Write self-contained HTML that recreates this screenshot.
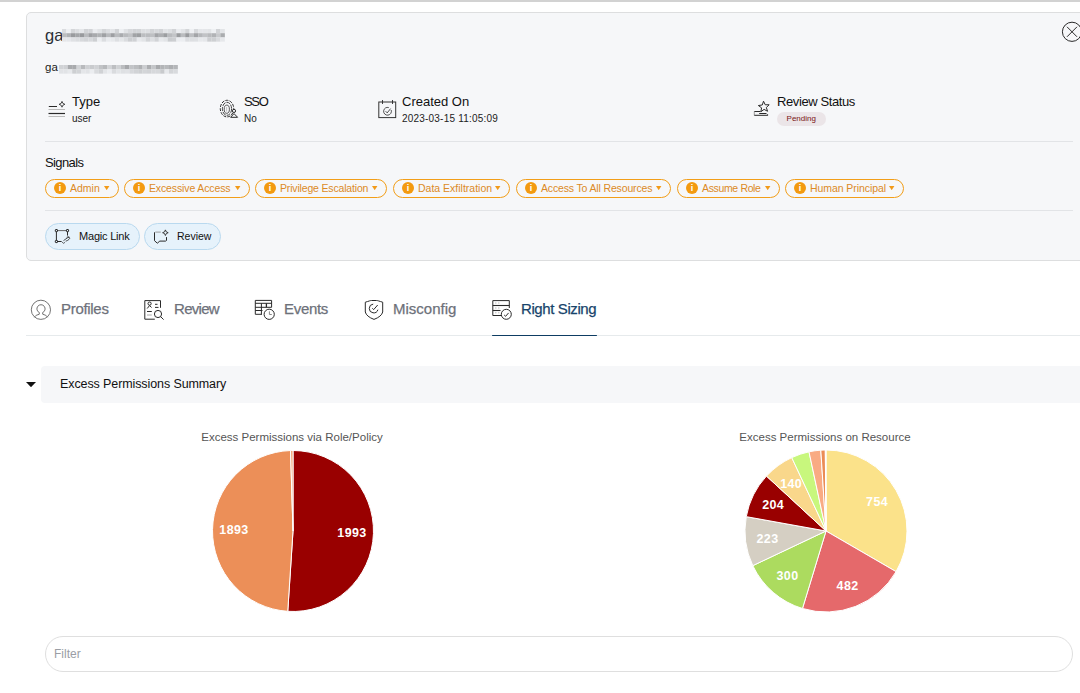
<!DOCTYPE html>
<html><head><meta charset="utf-8">
<style>
*{box-sizing:border-box;margin:0;padding:0}
html,body{width:1080px;height:693px;overflow:hidden;background:#fff;font-family:"Liberation Sans",sans-serif;color:#1a1a1a;position:relative}
.abs{position:absolute}
#topbar{left:0;top:0;width:1080px;height:2px;background:#d2d2d2}
#card{left:26px;top:12px;width:1080px;height:249px;background:#f6f7f9;border:1px solid #dddedf;border-radius:5px}
.hr{height:1px;background:#e2e4e7}
.lbl{font-size:13px;color:#111;white-space:nowrap}
.val{font-size:10px;color:#222;white-space:nowrap}
.chip{top:179px;height:19px;border:1.2px solid #f29e18;border-radius:10px;color:#dc8a26;font-size:10.5px;white-space:nowrap}
.chip .ic{position:absolute;left:8px;top:2px;width:12px;height:12px;border-radius:50%;background:#f39a10;color:#fff;font-size:9px;font-weight:bold;text-align:center;line-height:12px}
.chip .t{position:absolute;left:24px;top:2px}
.chip .dd{position:absolute;top:6.2px;right:8.2px}
.btn{top:223px;height:27px;border:1px solid #b9d9ef;background:#e6f2fb;border-radius:14px;font-size:11px;color:#111;white-space:nowrap}
.tab{top:300px;font-size:15px;color:#6d717a;white-space:nowrap;-webkit-text-stroke:0.25px currentColor}
</style></head><body>
<div id="topbar" class="abs"></div>
<div id="card" class="abs"></div>
<div class="abs" style="left:45px;top:26px;font-size:16.5px;color:#2b2f36;white-space:nowrap">ga</div>
<svg class="abs" style="left:62.4px;top:29px;filter:blur(0.45px)" width="162.8" height="12.6"><rect x="0.00" y="0.00" width="4.45" height="4.25" fill="rgb(218,220,223)"/><rect x="4.40" y="0.00" width="4.45" height="4.25" fill="rgb(238,240,243)"/><rect x="8.80" y="0.00" width="4.45" height="4.25" fill="rgb(212,214,217)"/><rect x="13.20" y="0.00" width="4.45" height="4.25" fill="rgb(220,222,225)"/><rect x="17.60" y="0.00" width="4.45" height="4.25" fill="rgb(228,230,233)"/><rect x="22.00" y="0.00" width="4.45" height="4.25" fill="rgb(209,211,214)"/><rect x="26.40" y="0.00" width="4.45" height="4.25" fill="rgb(210,212,215)"/><rect x="30.80" y="0.00" width="4.45" height="4.25" fill="rgb(234,236,239)"/><rect x="35.20" y="0.00" width="4.45" height="4.25" fill="rgb(225,227,230)"/><rect x="39.60" y="0.00" width="4.45" height="4.25" fill="rgb(211,213,216)"/><rect x="44.00" y="0.00" width="4.45" height="4.25" fill="rgb(219,221,224)"/><rect x="48.40" y="0.00" width="4.45" height="4.25" fill="rgb(226,228,231)"/><rect x="52.80" y="0.00" width="4.45" height="4.25" fill="rgb(209,211,214)"/><rect x="57.20" y="0.00" width="4.45" height="4.25" fill="rgb(237,239,242)"/><rect x="61.60" y="0.00" width="4.45" height="4.25" fill="rgb(224,226,229)"/><rect x="66.00" y="0.00" width="4.45" height="4.25" fill="rgb(214,216,219)"/><rect x="70.40" y="0.00" width="4.45" height="4.25" fill="rgb(209,211,214)"/><rect x="74.80" y="0.00" width="4.45" height="4.25" fill="rgb(210,212,215)"/><rect x="79.20" y="0.00" width="4.45" height="4.25" fill="rgb(221,223,226)"/><rect x="83.60" y="0.00" width="4.45" height="4.25" fill="rgb(221,223,226)"/><rect x="88.00" y="0.00" width="4.45" height="4.25" fill="rgb(210,212,215)"/><rect x="92.40" y="0.00" width="4.45" height="4.25" fill="rgb(215,217,220)"/><rect x="96.80" y="0.00" width="4.45" height="4.25" fill="rgb(210,212,215)"/><rect x="101.20" y="0.00" width="4.45" height="4.25" fill="rgb(225,227,230)"/><rect x="105.60" y="0.00" width="4.45" height="4.25" fill="rgb(221,223,226)"/><rect x="110.00" y="0.00" width="4.45" height="4.25" fill="rgb(209,211,214)"/><rect x="114.40" y="0.00" width="4.45" height="4.25" fill="rgb(234,236,239)"/><rect x="118.80" y="0.00" width="4.45" height="4.25" fill="rgb(226,228,231)"/><rect x="123.20" y="0.00" width="4.45" height="4.25" fill="rgb(211,213,216)"/><rect x="127.60" y="0.00" width="4.45" height="4.25" fill="rgb(238,240,243)"/><rect x="132.00" y="0.00" width="4.45" height="4.25" fill="rgb(215,217,220)"/><rect x="136.40" y="0.00" width="4.45" height="4.25" fill="rgb(228,230,233)"/><rect x="140.80" y="0.00" width="4.45" height="4.25" fill="rgb(228,230,233)"/><rect x="145.20" y="0.00" width="4.45" height="4.25" fill="rgb(226,228,231)"/><rect x="149.60" y="0.00" width="4.45" height="4.25" fill="rgb(238,240,243)"/><rect x="154.00" y="0.00" width="4.45" height="4.25" fill="rgb(209,211,214)"/><rect x="158.40" y="0.00" width="4.45" height="4.25" fill="rgb(226,228,231)"/><rect x="0.00" y="4.20" width="4.45" height="4.25" fill="rgb(187,189,192)"/><rect x="4.40" y="4.20" width="4.45" height="4.25" fill="rgb(175,177,180)"/><rect x="8.80" y="4.20" width="4.45" height="4.25" fill="rgb(153,155,158)"/><rect x="13.20" y="4.20" width="4.45" height="4.25" fill="rgb(164,166,169)"/><rect x="17.60" y="4.20" width="4.45" height="4.25" fill="rgb(152,154,157)"/><rect x="22.00" y="4.20" width="4.45" height="4.25" fill="rgb(185,187,190)"/><rect x="26.40" y="4.20" width="4.45" height="4.25" fill="rgb(158,160,163)"/><rect x="30.80" y="4.20" width="4.45" height="4.25" fill="rgb(168,170,173)"/><rect x="35.20" y="4.20" width="4.45" height="4.25" fill="rgb(176,178,181)"/><rect x="39.60" y="4.20" width="4.45" height="4.25" fill="rgb(159,161,164)"/><rect x="44.00" y="4.20" width="4.45" height="4.25" fill="rgb(184,186,189)"/><rect x="48.40" y="4.20" width="4.45" height="4.25" fill="rgb(157,159,162)"/><rect x="52.80" y="4.20" width="4.45" height="4.25" fill="rgb(186,188,191)"/><rect x="57.20" y="4.20" width="4.45" height="4.25" fill="rgb(169,171,174)"/><rect x="61.60" y="4.20" width="4.45" height="4.25" fill="rgb(185,187,190)"/><rect x="66.00" y="4.20" width="4.45" height="4.25" fill="rgb(193,195,198)"/><rect x="70.40" y="4.20" width="4.45" height="4.25" fill="rgb(161,163,166)"/><rect x="74.80" y="4.20" width="4.45" height="4.25" fill="rgb(156,158,161)"/><rect x="79.20" y="4.20" width="4.45" height="4.25" fill="rgb(187,189,192)"/><rect x="83.60" y="4.20" width="4.45" height="4.25" fill="rgb(186,188,191)"/><rect x="88.00" y="4.20" width="4.45" height="4.25" fill="rgb(190,192,195)"/><rect x="92.40" y="4.20" width="4.45" height="4.25" fill="rgb(162,164,167)"/><rect x="96.80" y="4.20" width="4.45" height="4.25" fill="rgb(173,175,178)"/><rect x="101.20" y="4.20" width="4.45" height="4.25" fill="rgb(156,158,161)"/><rect x="105.60" y="4.20" width="4.45" height="4.25" fill="rgb(185,187,190)"/><rect x="110.00" y="4.20" width="4.45" height="4.25" fill="rgb(195,197,200)"/><rect x="114.40" y="4.20" width="4.45" height="4.25" fill="rgb(154,156,159)"/><rect x="118.80" y="4.20" width="4.45" height="4.25" fill="rgb(186,188,191)"/><rect x="123.20" y="4.20" width="4.45" height="4.25" fill="rgb(153,155,158)"/><rect x="127.60" y="4.20" width="4.45" height="4.25" fill="rgb(189,191,194)"/><rect x="132.00" y="4.20" width="4.45" height="4.25" fill="rgb(163,165,168)"/><rect x="136.40" y="4.20" width="4.45" height="4.25" fill="rgb(181,183,186)"/><rect x="140.80" y="4.20" width="4.45" height="4.25" fill="rgb(193,195,198)"/><rect x="145.20" y="4.20" width="4.45" height="4.25" fill="rgb(184,186,189)"/><rect x="149.60" y="4.20" width="4.45" height="4.25" fill="rgb(177,179,182)"/><rect x="154.00" y="4.20" width="4.45" height="4.25" fill="rgb(199,201,204)"/><rect x="158.40" y="4.20" width="4.45" height="4.25" fill="rgb(170,172,175)"/><rect x="0.00" y="8.40" width="4.45" height="4.25" fill="rgb(229,231,234)"/><rect x="4.40" y="8.40" width="4.45" height="4.25" fill="rgb(229,231,234)"/><rect x="8.80" y="8.40" width="4.45" height="4.25" fill="rgb(223,225,228)"/><rect x="13.20" y="8.40" width="4.45" height="4.25" fill="rgb(219,221,224)"/><rect x="17.60" y="8.40" width="4.45" height="4.25" fill="rgb(215,217,220)"/><rect x="22.00" y="8.40" width="4.45" height="4.25" fill="rgb(211,213,216)"/><rect x="26.40" y="8.40" width="4.45" height="4.25" fill="rgb(215,217,220)"/><rect x="30.80" y="8.40" width="4.45" height="4.25" fill="rgb(205,207,210)"/><rect x="35.20" y="8.40" width="4.45" height="4.25" fill="rgb(236,238,241)"/><rect x="39.60" y="8.40" width="4.45" height="4.25" fill="rgb(219,221,224)"/><rect x="44.00" y="8.40" width="4.45" height="4.25" fill="rgb(233,235,238)"/><rect x="48.40" y="8.40" width="4.45" height="4.25" fill="rgb(231,233,236)"/><rect x="52.80" y="8.40" width="4.45" height="4.25" fill="rgb(221,223,226)"/><rect x="57.20" y="8.40" width="4.45" height="4.25" fill="rgb(228,230,233)"/><rect x="61.60" y="8.40" width="4.45" height="4.25" fill="rgb(218,220,223)"/><rect x="66.00" y="8.40" width="4.45" height="4.25" fill="rgb(204,206,209)"/><rect x="70.40" y="8.40" width="4.45" height="4.25" fill="rgb(207,209,212)"/><rect x="74.80" y="8.40" width="4.45" height="4.25" fill="rgb(232,234,237)"/><rect x="79.20" y="8.40" width="4.45" height="4.25" fill="rgb(226,228,231)"/><rect x="83.60" y="8.40" width="4.45" height="4.25" fill="rgb(210,212,215)"/><rect x="88.00" y="8.40" width="4.45" height="4.25" fill="rgb(221,223,226)"/><rect x="92.40" y="8.40" width="4.45" height="4.25" fill="rgb(209,211,214)"/><rect x="96.80" y="8.40" width="4.45" height="4.25" fill="rgb(231,233,236)"/><rect x="101.20" y="8.40" width="4.45" height="4.25" fill="rgb(226,228,231)"/><rect x="105.60" y="8.40" width="4.45" height="4.25" fill="rgb(202,204,207)"/><rect x="110.00" y="8.40" width="4.45" height="4.25" fill="rgb(204,206,209)"/><rect x="114.40" y="8.40" width="4.45" height="4.25" fill="rgb(235,237,240)"/><rect x="118.80" y="8.40" width="4.45" height="4.25" fill="rgb(236,238,241)"/><rect x="123.20" y="8.40" width="4.45" height="4.25" fill="rgb(220,222,225)"/><rect x="127.60" y="8.40" width="4.45" height="4.25" fill="rgb(221,223,226)"/><rect x="132.00" y="8.40" width="4.45" height="4.25" fill="rgb(222,224,227)"/><rect x="136.40" y="8.40" width="4.45" height="4.25" fill="rgb(231,233,236)"/><rect x="140.80" y="8.40" width="4.45" height="4.25" fill="rgb(229,231,234)"/><rect x="145.20" y="8.40" width="4.45" height="4.25" fill="rgb(204,206,209)"/><rect x="149.60" y="8.40" width="4.45" height="4.25" fill="rgb(205,207,210)"/><rect x="154.00" y="8.40" width="4.45" height="4.25" fill="rgb(217,219,222)"/><rect x="158.40" y="8.40" width="4.45" height="4.25" fill="rgb(230,232,235)"/></svg>
<div class="abs" style="left:45px;top:61px;font-size:11.5px;color:#222;white-space:nowrap">ga</div>
<svg class="abs" style="left:58.8px;top:65px;filter:blur(0.45px)" width="118.8" height="8.6"><rect x="0.00" y="0.00" width="4.45" height="4.35" fill="rgb(209,211,214)"/><rect x="4.40" y="0.00" width="4.45" height="4.35" fill="rgb(207,209,212)"/><rect x="8.80" y="0.00" width="4.45" height="4.35" fill="rgb(169,171,174)"/><rect x="13.20" y="0.00" width="4.45" height="4.35" fill="rgb(168,170,173)"/><rect x="17.60" y="0.00" width="4.45" height="4.35" fill="rgb(209,211,214)"/><rect x="22.00" y="0.00" width="4.45" height="4.35" fill="rgb(184,186,189)"/><rect x="26.40" y="0.00" width="4.45" height="4.35" fill="rgb(206,208,211)"/><rect x="30.80" y="0.00" width="4.45" height="4.35" fill="rgb(201,203,206)"/><rect x="35.20" y="0.00" width="4.45" height="4.35" fill="rgb(208,210,213)"/><rect x="39.60" y="0.00" width="4.45" height="4.35" fill="rgb(193,195,198)"/><rect x="44.00" y="0.00" width="4.45" height="4.35" fill="rgb(183,185,188)"/><rect x="48.40" y="0.00" width="4.45" height="4.35" fill="rgb(210,212,215)"/><rect x="52.80" y="0.00" width="4.45" height="4.35" fill="rgb(189,191,194)"/><rect x="57.20" y="0.00" width="4.45" height="4.35" fill="rgb(207,209,212)"/><rect x="61.60" y="0.00" width="4.45" height="4.35" fill="rgb(187,189,192)"/><rect x="66.00" y="0.00" width="4.45" height="4.35" fill="rgb(166,168,171)"/><rect x="70.40" y="0.00" width="4.45" height="4.35" fill="rgb(194,196,199)"/><rect x="74.80" y="0.00" width="4.45" height="4.35" fill="rgb(187,189,192)"/><rect x="79.20" y="0.00" width="4.45" height="4.35" fill="rgb(175,177,180)"/><rect x="83.60" y="0.00" width="4.45" height="4.35" fill="rgb(204,206,209)"/><rect x="88.00" y="0.00" width="4.45" height="4.35" fill="rgb(172,174,177)"/><rect x="92.40" y="0.00" width="4.45" height="4.35" fill="rgb(196,198,201)"/><rect x="96.80" y="0.00" width="4.45" height="4.35" fill="rgb(168,170,173)"/><rect x="101.20" y="0.00" width="4.45" height="4.35" fill="rgb(178,180,183)"/><rect x="105.60" y="0.00" width="4.45" height="4.35" fill="rgb(183,185,188)"/><rect x="110.00" y="0.00" width="4.45" height="4.35" fill="rgb(173,175,178)"/><rect x="114.40" y="0.00" width="4.45" height="4.35" fill="rgb(180,182,185)"/><rect x="0.00" y="4.30" width="4.45" height="4.35" fill="rgb(225,227,230)"/><rect x="4.40" y="4.30" width="4.45" height="4.35" fill="rgb(225,227,230)"/><rect x="8.80" y="4.30" width="4.45" height="4.35" fill="rgb(231,233,236)"/><rect x="13.20" y="4.30" width="4.45" height="4.35" fill="rgb(205,207,210)"/><rect x="17.60" y="4.30" width="4.45" height="4.35" fill="rgb(210,212,215)"/><rect x="22.00" y="4.30" width="4.45" height="4.35" fill="rgb(228,230,233)"/><rect x="26.40" y="4.30" width="4.45" height="4.35" fill="rgb(225,227,230)"/><rect x="30.80" y="4.30" width="4.45" height="4.35" fill="rgb(235,237,240)"/><rect x="35.20" y="4.30" width="4.45" height="4.35" fill="rgb(217,219,222)"/><rect x="39.60" y="4.30" width="4.45" height="4.35" fill="rgb(208,210,213)"/><rect x="44.00" y="4.30" width="4.45" height="4.35" fill="rgb(227,229,232)"/><rect x="48.40" y="4.30" width="4.45" height="4.35" fill="rgb(235,237,240)"/><rect x="52.80" y="4.30" width="4.45" height="4.35" fill="rgb(217,219,222)"/><rect x="57.20" y="4.30" width="4.45" height="4.35" fill="rgb(226,228,231)"/><rect x="61.60" y="4.30" width="4.45" height="4.35" fill="rgb(222,224,227)"/><rect x="66.00" y="4.30" width="4.45" height="4.35" fill="rgb(224,226,229)"/><rect x="70.40" y="4.30" width="4.45" height="4.35" fill="rgb(214,216,219)"/><rect x="74.80" y="4.30" width="4.45" height="4.35" fill="rgb(209,211,214)"/><rect x="79.20" y="4.30" width="4.45" height="4.35" fill="rgb(205,207,210)"/><rect x="83.60" y="4.30" width="4.45" height="4.35" fill="rgb(211,213,216)"/><rect x="88.00" y="4.30" width="4.45" height="4.35" fill="rgb(209,211,214)"/><rect x="92.40" y="4.30" width="4.45" height="4.35" fill="rgb(214,216,219)"/><rect x="96.80" y="4.30" width="4.45" height="4.35" fill="rgb(214,216,219)"/><rect x="101.20" y="4.30" width="4.45" height="4.35" fill="rgb(200,202,205)"/><rect x="105.60" y="4.30" width="4.45" height="4.35" fill="rgb(231,233,236)"/><rect x="110.00" y="4.30" width="4.45" height="4.35" fill="rgb(211,213,216)"/><rect x="114.40" y="4.30" width="4.45" height="4.35" fill="rgb(216,218,221)"/></svg>

<div class="abs lbl" style="left:72px;top:94px">Type</div>
<div class="abs val" style="left:72px;top:113px">user</div>
<div class="abs lbl" style="left:244px;top:94px;letter-spacing:-1.3px">SSO</div>
<div class="abs val" style="left:244px;top:113px">No</div>
<div class="abs lbl" style="left:402px;top:94px">Created On</div>
<div class="abs val" style="left:402px;top:113px;letter-spacing:0.2px">2023-03-15 11:05:09</div>
<div class="abs lbl" style="left:777px;top:94px;letter-spacing:-0.4px">Review Status</div>
<div class="abs" style="left:777px;top:112px;width:48.5px;height:13.5px;border-radius:7px;background:#ebe5e8;color:#7a1515;font-size:8px;text-align:center;line-height:14px">Pending</div>

<div class="abs hr" style="left:45px;top:141px;width:1028px"></div>
<div class="abs lbl" style="left:45px;top:155px;letter-spacing:-0.6px">Signals</div>

<div class="abs chip" style="left:45px;width:74px"><span class="ic">i</span><span class="t">Admin</span><svg class="dd" width="5.4" height="4.2"><path d="M0 0 L5.4 0 L2.7 4.2 Z" fill="#f29a18"/></svg></div>
<div class="abs chip" style="left:124px;width:126px"><span class="ic">i</span><span class="t" style="letter-spacing:-0.13px">Excessive Access</span><svg class="dd" width="5.4" height="4.2"><path d="M0 0 L5.4 0 L2.7 4.2 Z" fill="#f29a18"/></svg></div>
<div class="abs chip" style="left:255px;width:132px"><span class="ic">i</span><span class="t" style="letter-spacing:-0.17px">Privilege Escalation</span><svg class="dd" width="5.4" height="4.2"><path d="M0 0 L5.4 0 L2.7 4.2 Z" fill="#f29a18"/></svg></div>
<div class="abs chip" style="left:393px;width:117px"><span class="ic">i</span><span class="t">Data Exfiltration</span><svg class="dd" width="5.4" height="4.2"><path d="M0 0 L5.4 0 L2.7 4.2 Z" fill="#f29a18"/></svg></div>
<div class="abs chip" style="left:516px;width:155px"><span class="ic">i</span><span class="t" style="letter-spacing:-0.15px">Access To All Resources</span><svg class="dd" width="5.4" height="4.2"><path d="M0 0 L5.4 0 L2.7 4.2 Z" fill="#f29a18"/></svg></div>
<div class="abs chip" style="left:677px;width:103px"><span class="ic">i</span><span class="t" style="letter-spacing:-0.35px">Assume Role</span><svg class="dd" width="5.4" height="4.2"><path d="M0 0 L5.4 0 L2.7 4.2 Z" fill="#f29a18"/></svg></div>
<div class="abs chip" style="left:785px;width:119px"><span class="ic">i</span><span class="t" style="letter-spacing:-0.07px">Human Principal</span><svg class="dd" width="5.4" height="4.2"><path d="M0 0 L5.4 0 L2.7 4.2 Z" fill="#f29a18"/></svg></div>

<div class="abs hr" style="left:45px;top:210px;width:1028px"></div>
<div class="abs btn" style="left:45px;width:95px"><span class="abs" style="left:33px;top:6px;letter-spacing:-0.2px">Magic Link</span></div>
<div class="abs btn" style="left:144px;width:77px"><span class="abs" style="left:32px;top:6px;font-size:10.5px">Review</span></div>

<div class="abs tab" style="left:61px;letter-spacing:-0.3px">Profiles</div>
<div class="abs tab" style="left:174px;letter-spacing:-0.7px">Review</div>
<div class="abs tab" style="left:284px;letter-spacing:-0.3px">Events</div>
<div class="abs tab" style="left:393px">Misconfig</div>
<div class="abs tab" style="left:521px;color:#18446b;letter-spacing:-0.4px">Right Sizing</div>
<div class="abs hr" style="left:26px;top:335px;width:1054px;background:#e6eaec"></div>
<div class="abs" style="left:492px;top:334.5px;width:105px;height:1.7px;background:#0e3d63;border-radius:1px"></div>

<svg class="abs" style="left:26px;top:382px" width="10" height="5.2"><path d="M0 0 L10 0 L5 5.2 Z" fill="#111"/></svg>
<div class="abs" style="left:41px;top:366px;width:1050px;height:36.5px;background:#f6f7f9;border-radius:4px"></div>
<div class="abs" style="left:60px;top:377px;font-size:12.5px;color:#111;white-space:nowrap;letter-spacing:-0.1px">Excess Permissions Summary</div>

<div class="abs" style="left:192px;top:430.7px;width:200px;text-align:center;font-size:11.5px;color:#555;white-space:nowrap">Excess Permissions via Role/Policy</div>
<div class="abs" style="left:675px;top:430.7px;width:300px;text-align:center;font-size:11.5px;color:#555;white-space:nowrap">Excess Permissions on Resource</div>
<svg class="abs" style="left:0;top:0" width="1080" height="693" font-family="Liberation Sans, sans-serif">
<path d="M293,531 L293.00,450.50 A80.5,80.5 0 1 1 287.76,611.33 Z" fill="#990000" stroke="#fff" stroke-width="1"/>
<path d="M293,531 L287.76,611.33 A80.5,80.5 0 0 1 290.54,450.54 Z" fill="#ec8f58" stroke="#fff" stroke-width="1"/>
<path d="M293,531 L290.54,450.54 A80.5,80.5 0 0 1 293.00,450.50 Z" fill="#f3a070" stroke="#fff" stroke-width="1"/>
<text x="352.0" y="537.3" text-anchor="middle" font-size="12.5" font-weight="bold" letter-spacing="0.4" fill="#fff">1993</text>
<text x="234.0" y="534.4" text-anchor="middle" font-size="12.5" font-weight="bold" letter-spacing="0.4" fill="#fff">1893</text>
<path d="M826,531 L826.00,450.00 A81,81 0 0 1 896.07,571.63 Z" fill="#fbe28a" stroke="#fff" stroke-width="1"/>
<path d="M826,531 L896.07,571.63 A81,81 0 0 1 802.47,608.51 Z" fill="#e5696b" stroke="#fff" stroke-width="1"/>
<path d="M826,531 L802.47,608.51 A81,81 0 0 1 752.79,565.65 Z" fill="#acdb5f" stroke="#fff" stroke-width="1"/>
<path d="M826,531 L752.79,565.65 A81,81 0 0 1 746.28,516.66 Z" fill="#d5cfc3" stroke="#fff" stroke-width="1"/>
<path d="M826,531 L746.28,516.66 A81,81 0 0 1 766.46,476.08 Z" fill="#990000" stroke="#fff" stroke-width="1"/>
<path d="M826,531 L766.46,476.08 A81,81 0 0 1 791.76,457.59 Z" fill="#f9d78b" stroke="#fff" stroke-width="1"/>
<path d="M826,531 L791.76,457.59 A81,81 0 0 1 809.01,451.80 Z" fill="#c8f77d" stroke="#fff" stroke-width="1"/>
<path d="M826,531 L809.01,451.80 A81,81 0 0 1 820.82,450.17 Z" fill="#f9ab83" stroke="#fff" stroke-width="1"/>
<path d="M826,531 L820.82,450.17 A81,81 0 0 1 825.32,450.00 Z" fill="#eb8c55" stroke="#fff" stroke-width="1"/>
<path d="M826,531 L825.32,450.00 A81,81 0 0 1 826.00,450.00 Z" fill="#fbe8c8" stroke="#fff" stroke-width="1"/>
<text x="877.1" y="505.9" text-anchor="middle" font-size="12.5" font-weight="bold" letter-spacing="0.4" fill="#fff">754</text>
<text x="847.6" y="590.3" text-anchor="middle" font-size="12.5" font-weight="bold" letter-spacing="0.4" fill="#fff">482</text>
<text x="787.5" y="580.1" text-anchor="middle" font-size="12.5" font-weight="bold" letter-spacing="0.4" fill="#fff">300</text>
<text x="767.5" y="543.2" text-anchor="middle" font-size="12.5" font-weight="bold" letter-spacing="0.4" fill="#fff">223</text>
<text x="773.2" y="509.1" text-anchor="middle" font-size="12.5" font-weight="bold" letter-spacing="0.4" fill="#fff">204</text>
<text x="791.2" y="487.8" text-anchor="middle" font-size="12.5" font-weight="bold" letter-spacing="0.4" fill="#fff">140</text>
</svg>

<svg class="abs" style="left:0;top:0" width="1080" height="693">
<!-- type icon -->
<g fill="none" stroke="#2a2a2a" stroke-width="1">
<line x1="48.8" y1="106.5" x2="57" y2="106.5" stroke-width="1"/>
<path d="M62 101.4 Q62.3 103.9 64.9 104.3 Q62.3 104.7 62 107.2 Q61.7 104.7 59.1 104.3 Q61.7 103.9 62 101.4 Z" stroke-width="0.85"/>
<line x1="48.5" y1="109.5" x2="65" y2="109.5" stroke="#bbb"/>
<line x1="48.5" y1="113.5" x2="65" y2="113.5" stroke-width="1.2"/>
<line x1="48.5" y1="116.5" x2="65" y2="116.5" stroke="#bbb"/>
</g>
<!-- sso icon -->
<g fill="none" stroke="#2a2a2a" stroke-width="1" stroke-width="0.85">
<ellipse cx="227" cy="108.6" rx="6.7" ry="8.3" stroke-dasharray="3 1.2"/>
<ellipse cx="227" cy="108.8" rx="4.6" ry="6.5" stroke-dasharray="4 1" stroke="#444"/>
<ellipse cx="226.8" cy="109.2" rx="2.6" ry="4.1" stroke="#555"/>
<line x1="226.6" y1="107" x2="226.6" y2="111.5" stroke="#aaa" stroke-width="0.7"/>
<circle cx="234" cy="110.9" r="1.6" fill="#f6f7f9"/>
<path d="M230.6 117.3 L234 113.6 L237.6 117.3 Z" fill="#f6f7f9" stroke-linejoin="round"/>
</g>
<!-- calendar icon -->
<g fill="none" stroke="#2a2a2a" stroke-width="1">
<rect x="378.8" y="102" width="16.9" height="15.6" stroke="#333"/>
<line x1="382.5" y1="100" x2="382.5" y2="104" stroke-width="0.9"/>
<line x1="392.5" y1="100" x2="392.5" y2="104" stroke-width="0.9"/>
<path d="M391.2 110 A3.9 3.9 0 1 1 388.8 107.6" stroke-width="0.8"/>
<path d="M385.6 111.2 L387.2 112.9 L390.6 108.6" stroke-width="0.8"/>
</g>
<!-- review status icon -->
<g fill="none" stroke="#2a2a2a" stroke-width="1" stroke-width="0.85">
<path d="M763.50 101.21 L765.22 104.78 L769.18 104.76 L766.33 107.50 L767.56 111.27 L764.07 109.39 L760.88 111.73 L761.58 107.84 L758.37 105.52 L762.29 104.98 Z"/>
<path d="M754.3 111.5 L760.5 111.5" stroke-width="1"/>
<path d="M754.3 111.5 L754.3 115.4" stroke="#777" stroke-width="0.7"/>
<path d="M754.3 115.3 L767.6 115.3 M767.6 114.3 L767.6 115.6 M759.2 113.5 L766.5 113.5"/>
</g>
<!-- close icon -->
<g fill="none" stroke="#2a2a2a" stroke-width="1" stroke="#222" stroke-width="1.1">
<circle cx="1072" cy="31.8" r="9.6"/>
<line x1="1067" y1="26.8" x2="1077" y2="36.8"/>
<line x1="1077" y1="26.8" x2="1067" y2="36.8"/>
</g>
<!-- magic link icon -->
<g fill="none" stroke="#2a2a2a" stroke-width="1" stroke="#1e1e1e" stroke-width="0.9">
<path d="M57.6 230.6 L66.3 230.6" stroke="#666"/>
<path d="M56.4 231.8 L56.4 240.3 M57.6 241.5 L61.6 241.5 M67.5 231.8 L67.5 235.6" stroke-width="1"/>
<rect x="55.3" y="229.5" width="2.2" height="2.2" rx="0.5"/><rect x="66.4" y="229.5" width="2.2" height="2.2" rx="0.5"/><rect x="55.3" y="240.4" width="2.2" height="2.2" rx="0.5"/>
<path d="M62 241.8 L63.6 243.4 L64.8 242.3 M63.5 240.6 L67.8 237.6 Q69.6 236.6 69.8 238.2 L69 239.4 Q67.5 240.8 65.6 241.2 M66.6 237.3 Q68 236.5 69.2 237" stroke-width="0.8"/>
</g>
<!-- review btn icon -->
<g fill="none" stroke="#2a2a2a" stroke-width="1" stroke="#1e1e1e" stroke-width="1">
<path d="M155.3 232.1 L160.8 232.1" stroke="#9a9a9a"/>
<path d="M154.5 232.3 L154.5 240.7 L157.3 243.2 L159.8 241.1 L165.8 241.1 L166.5 240.4 L166.5 237.1"/>
<path d="M165.4 229.9 Q165.7 232.4 168.2 232.7 Q165.7 233 165.4 235.5 Q165.1 233 162.6 232.7 Q165.1 232.4 165.4 229.9 Z" stroke-width="0.9"/>
</g>
<!-- profiles tab icon -->
<g fill="none" stroke="#2a2a2a" stroke-width="1" stroke="#555" stroke-width="0.9">
<circle cx="40.9" cy="309.8" r="9.6" stroke="#5a5a5a" stroke-width="0.85"/>
<path d="M39.4 312.6 A4.1 4.1 0 1 1 42.6 312.6 L42.8 314.3 Q46.3 314.8 47.6 317.2 M39.4 312.6 L39.2 314.3 Q35.7 314.8 34.3 317.2" stroke="#5a5a5a" stroke-width="0.85"/>
</g>
<!-- review tab icon -->
<g fill="none" stroke="#2a2a2a" stroke-width="1" stroke="#5a5a5a" stroke-width="0.8">
<path d="M160.5 307.8 L160.5 300.6 L144.8 300.6 L144.8 319.2 L154.8 319.2"/>
<circle cx="149.6" cy="303.6" r="1.6"/>
<path d="M147.2 308.5 L149.6 305.5 L151.5 307.5"/>
<line x1="155" y1="304.3" x2="157.5" y2="304.3"/><line x1="155" y1="307.4" x2="158.5" y2="307.4"/>
<line x1="147" y1="311.5" x2="151.8" y2="311.5"/><line x1="147" y1="315" x2="151.8" y2="315" stroke="#aaa"/>
<circle cx="158" cy="314" r="3.6"/><line x1="160.6" y1="316.6" x2="163.6" y2="319.6"/>
</g>
<!-- events tab icon -->
<g fill="none" stroke="#2a2a2a" stroke-width="1" stroke="#4a4a4a" stroke-width="0.8">
<path d="M271.6 307.3 L271.6 300.4 L255.3 300.4 L255.3 314.3 L262 314.3"/>
<line x1="255.3" y1="303.3" x2="271.6" y2="303.3"/>
<line x1="255.3" y1="307.3" x2="271.6" y2="307.3"/>
<line x1="255.3" y1="310.5" x2="262.5" y2="310.5"/>
<line x1="261.4" y1="303.3" x2="261.4" y2="314.3"/>
<line x1="266.4" y1="303.3" x2="266.4" y2="307.3" stroke-width="1.3"/>
<circle cx="269.2" cy="314.3" r="5.1"/>
<path d="M269.4 311.3 L269.4 314.5 L271.8 314.5" stroke="#888"/>
</g>
<!-- misconfig tab icon -->
<g fill="none" stroke="#2a2a2a" stroke-width="1" stroke="#5a5a5a" stroke-width="0.8">
<path d="M365.3 302.2 Q367.5 301.6 369.5 300.9 Q370.5 300.5 371.5 300.5 L376.5 300.5 Q377.5 300.5 378.5 300.9 Q380.5 301.6 382.7 302.2 L382.7 312 Q381.5 316.6 374 319.4 Q366.5 316.6 365.3 312 Z"/>
<path d="M377.9 309.7 A4.4 4.4 0 1 1 373.2 304.1"/>
<path d="M372.3 308.3 L373.7 309.6 L377.7 305"/>
</g>
<!-- right sizing tab icon -->
<g fill="none" stroke="#2a2a2a" stroke-width="1" stroke="#4a4a4a" stroke-width="0.8">
<path d="M501.5 315.5 L492.8 315.5 L492.8 300.6 L509.3 300.6 L509.3 308"/>
<line x1="492.8" y1="305.5" x2="509.3" y2="305.5" stroke-width="1.1"/>
<line x1="492.8" y1="310.5" x2="500.5" y2="310.5" stroke-width="1.1"/>
<g stroke="#bbb" stroke-width="1"><line x1="495" y1="303" x2="496.5" y2="303"/><line x1="498" y1="303" x2="499.5" y2="303"/>
<line x1="495" y1="308" x2="496.5" y2="308"/><line x1="498" y1="308" x2="499.5" y2="308"/>
<line x1="495" y1="312.8" x2="496.5" y2="312.8"/><line x1="498" y1="312.8" x2="499.5" y2="312.8"/></g>
<circle cx="506.3" cy="314.3" r="5"/>
<path d="M504.2 315 L505.6 316.3 L508.6 312.9"/>
</g>
</svg>

<div class="abs" style="left:45px;top:636px;width:1028px;height:35.6px;border:1.4px solid #dfdfdf;border-radius:18px"></div>
<div class="abs" style="left:54px;top:647px;font-size:12px;color:#9a9ea5">Filter</div>
</body></html>
